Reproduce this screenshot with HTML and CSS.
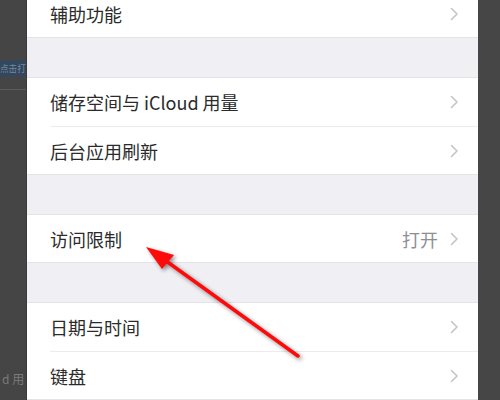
FILE: index.html
```html
<!DOCTYPE html>
<html lang="zh">
<head>
<meta charset="utf-8">
<link rel="stylesheet" href="styles.css">
</head>
<body>
<div class="screen">
  <aside class="side side-left">
    <div class="side-band"><span class="side-band-text">点击打</span></div>
    <div class="side-line"></div>
    <div class="side-spacer"></div>
    <div class="side-bottom"><span>d 用</span></div>
  </aside>
  <main class="settings">
    <div class="group group-first">
      <div class="row"><span class="label">辅助功能</span><span class="chev"><svg width="9" height="14" viewBox="0 0 9 14"><polyline points="1.5,1.5 7,7 1.5,12.5" /></svg></span></div>
    </div>
    <div class="gap"></div>
    <div class="group">
      <div class="row"><span class="label">储存空间与 iCloud 用量</span><span class="chev"><svg width="9" height="14" viewBox="0 0 9 14"><polyline points="1.5,1.5 7,7 1.5,12.5" /></svg></span></div>
      <div class="row"><span class="label">后台应用刷新</span><span class="chev"><svg width="9" height="14" viewBox="0 0 9 14"><polyline points="1.5,1.5 7,7 1.5,12.5" /></svg></span></div>
    </div>
    <div class="gap"></div>
    <div class="group">
      <div class="row"><span class="label">访问限制</span><span class="value">打开</span><span class="chev"><svg width="9" height="14" viewBox="0 0 9 14"><polyline points="1.5,1.5 7,7 1.5,12.5" /></svg></span></div>
    </div>
    <div class="gap"></div>
    <div class="group">
      <div class="row"><span class="label">日期与时间</span><span class="chev"><svg width="9" height="14" viewBox="0 0 9 14"><polyline points="1.5,1.5 7,7 1.5,12.5" /></svg></span></div>
      <div class="row"><span class="label">键盘</span><span class="chev"><svg width="9" height="14" viewBox="0 0 9 14"><polyline points="1.5,1.5 7,7 1.5,12.5" /></svg></span></div>
    </div>
  </main>
  <aside class="side side-right"></aside>
  <svg class="arrow" width="500" height="400" viewBox="0 0 500 400">
    <line x1="298" y1="356" x2="162" y2="258" />
    <polygon points="146,247 174,255 162,269" />
  </svg>
</div>
</body>
</html>
```

FILE: styles.css
```css
* { box-sizing: border-box; }
html, body {
  margin: 0;
  padding: 0;
  width: 500px;
  height: 400px;
  overflow: hidden;
  background: #444444;
}
.screen {
  position: relative;
  display: flex;
  width: 500px;
  height: 400px;
  overflow: hidden;
  font-family: "Noto Sans CJK SC", "Noto Sans", sans-serif;
}
.side {
  background: #454545;
  flex: none;
}
.side-left {
  width: 27px;
  display: flex;
  flex-direction: column;
  overflow: hidden;
  border-right: 1px solid #3a3a3a;
}
.side-band {
  margin-top: 60px;
  height: 17px;
  background: #35475a;
  overflow: hidden;
  white-space: nowrap;
  display: flex;
  align-items: center;
}
.side-band-text {
  font-size: 8.6px;
  line-height: 17px;
  color: #6e8aa6;
}
.side-line {
  margin-top: 12px;
  height: 1px;
  background: #5c5c5c;
}
.side-spacer { flex: 1; }
.side-bottom {
  height: 30px;
  white-space: nowrap;
  overflow: hidden;
  font-size: 12px;
  line-height: 18px;
  color: #7a7a7a;
  padding-left: 2px;
}
.side-right {
  width: 22px;
  background: #464646;
}
.settings {
  width: 451px;
  flex: none;
  background: #efeff4;
  display: flex;
  flex-direction: column;
}
.group {
  background: #ffffff;
  border-top: 1px solid #e3e3e8;
  border-bottom: 1px solid #e3e3e8;
}
.group-first {
  margin-top: -10px;
  border-top: none;
}
.gap {
  height: 39px;
  flex: none;
}
.row {
  height: 49px;
  margin-left: 23px;
  padding-right: 19px;
  display: flex;
  align-items: center;
  border-bottom: 1px solid #ececef;
  font-size: 18px;
  color: #2b2b2b;
}
.row:last-child { border-bottom: none; height: 47px; }
.label { flex: 1; }
.value {
  color: #8e8e93;
  margin-right: 12px;
}
.chev {
  display: flex;
  align-items: center;
}
.chev svg polyline {
  fill: none;
  stroke: #c4c4c9;
  stroke-width: 1.6;
  stroke-linecap: round;
  stroke-linejoin: round;
}
.arrow {
  position: absolute;
  left: 0;
  top: 0;
  pointer-events: none;
  filter: drop-shadow(2px 2px 2px rgba(0,0,0,0.45));
}
.arrow line {
  stroke: #ff0a0a;
  stroke-width: 3.5;
  stroke-linecap: round;
}
.arrow polygon {
  fill: #ff0a0a;
}
```
